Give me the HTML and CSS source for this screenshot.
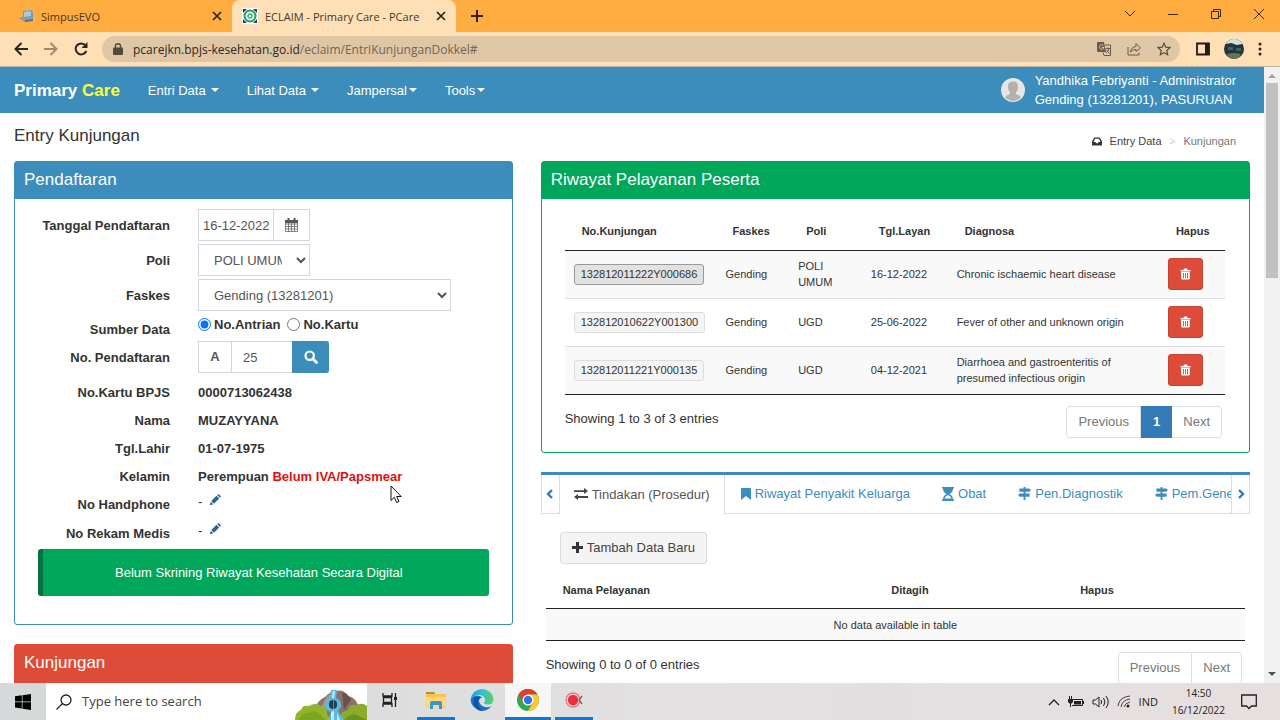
FILE: index.html
```html
<!DOCTYPE html>
<html lang="id">
<head>
    <meta charset="UTF-8">
    <meta name="viewport" content="width=device-width, initial-scale=1.0">
    <title>ECLAIM - Primary Care - PCare</title>
    <link rel="stylesheet" href="styles.css">
</head>
<body>
    <svg class="defs" width="0" height="0">
        <symbol id="i-pencil" viewBox="0 0 14 14"><path d="M1 13l1-4 3 3zM2.6 8.2L8.700 2.1l3.2 3.2-6.100 6.100zM9.500 1.300l.8-.8q.7-.6 1.400 0l1.800 1.800q.6.7 0 1.400l-.8.8z"/></symbol>
        <symbol id="i-trash" viewBox="0 0 12 12"><path fill-rule="evenodd" d="M4 0h4v1.500h3.500V3H.5V1.500H4zM1.300 3.500h9.400V11q0 1-1 1H2.300q-1 0-1-1zM3.300 5v5.500h1V5zM5.500 5v5.500h1V5zM7.700 5v5.500h1V5z"/></symbol>
        <symbol id="i-sign" viewBox="0 0 14 14"><path d="M6 0h2v14H6zM1.500 1.500H12l2 1.800-2 1.800H1.500zM2 7h10.500v3.500H2L0 8.700z"/></symbol>
        <symbol id="i-close" viewBox="0 0 10 10"><path d="M1 1l8 8M9 1l-8 8" fill="none" stroke="#2b2218" stroke-width="1.700"/></symbol>
    </svg>

    <div class="tabstrip">
        <div class="tab">
            <svg class="favicon" width="14" height="14" viewBox="0 0 14 14"><path d="M3 2l8-1 2 2v6l-9 1-1-1z" fill="#6f9cb9"/><path d="M4 3l7-1v5l-7 1z" fill="#a9c9dc"/><path d="M0 8h3l1 2 9-1v3l-8 1-5-3z" fill="#8f9aa6"/><path d="M5 11l8-1v2l-8 1z" fill="#56748c"/></svg>
            <span class="tab-title">SimpusEVO</span>
            <button class="tab-close" aria-label="Close"><svg width="10" height="10"><use href="#i-close"/></svg></button>
        </div>
        <div class="tab active">
            <svg class="favicon" width="16" height="16" viewBox="0 0 16 16"><rect width="16" height="16" rx="1" fill="#fff"/><path d="M1 1h4L1 5z" fill="#1b3c83"/><path d="M15 1v4l-4-4zM1 15v-4l4 4zM15 15h-4l4-4z" fill="#1b3c83"/><circle cx="8" cy="8" r="5.500" fill="none" stroke="#19a05b" stroke-width="2"/><circle cx="8" cy="8" r="2" fill="none" stroke="#35b56f" stroke-width="1.500"/></svg>
            <span class="tab-title">ECLAIM - Primary Care - PCare</span>
            <button class="tab-close" aria-label="Close"><svg width="10" height="10"><use href="#i-close"/></svg></button>
        </div>
        <button class="new-tab" aria-label="New tab"><svg width="12" height="12"><path d="M6 0v12M0 6h12" stroke="#2b2218" stroke-width="2"/></svg></button>
        <div class="window-buttons">
            <button aria-label="Search tabs"><svg width="12" height="12"><path d="M1 3l5 5 5-5" fill="none" stroke="#3a2a12"/></svg></button>
            <button aria-label="Minimize"><svg width="12" height="12"><path d="M1 6.500h10" stroke="#3a2a12"/></svg></button>
            <button aria-label="Restore"><svg width="12" height="12"><path d="M1.500 3.500h7v7h-7zM3.500 3.500v-2h7v7h-2" fill="none" stroke="#3a2a12"/></svg></button>
            <button aria-label="Close"><svg width="12" height="12"><path d="M1 1l10 10M11 1L1 11" stroke="#3a2a12"/></svg></button>
        </div>
    </div>

    <div class="toolbar">
        <button aria-label="Back"><svg width="14" height="14" viewBox="0 0 14 14"><path d="M14 7H2M7.500 1L1.500 7l6 6" fill="none" stroke="#2b2520" stroke-width="2"/></svg></button>
        <button aria-label="Forward"><svg width="14" height="14" viewBox="0 0 14 14"><path d="M0 7h12M6.500 1l6 6-6 6" fill="none" stroke="#a38a6c" stroke-width="2"/></svg></button>
        <button aria-label="Reload"><svg width="14" height="14" viewBox="0 0 14 14"><path d="M11.500 3.500A5.500 5.500 0 1 0 12.300 9" fill="none" stroke="#2b2520" stroke-width="2"/><path d="M13.500 0v6h-6z" fill="#2b2520"/></svg></button>
        <div class="address">
            <svg width="10" height="12" viewBox="0 0 10 12"><path d="M1 4.500h8q1 0 1 1V11q0 1-1 1H1q-1 0-1-1V5.500q0-1 1-1z" fill="#55493b"/><path d="M2.500 5V3q0-2.200 2.500-2.200T7.500 3v2" fill="none" stroke="#55493b" stroke-width="1.400"/></svg>
            <span class="url"><b>pcarejkn.bpjs-kesehatan.go.id</b>/eclaim/EntriKunjunganDokkel#</span>
            <button aria-label="Translate"><svg width="14" height="14" viewBox="0 0 14 14"><path d="M1 0h6l2 10H1Q0 10 0 9V1q0-1 1-1z" fill="#6b5b48"/><path d="M6.500 3.500A2.300 2.300 0 1 0 7 5.500H4.800" fill="none" stroke="#dfc6a4"/><path d="M8 3h5.500v10.500H7L6 10.500" fill="none" stroke="#6b5b48"/><path d="M8.500 6.500H13M10.700 5.500v1M12 6.500q-.5 2.500-3 4.500M9.500 8l3 3.500" fill="none" stroke="#6b5b48"/></svg></button>
            <button aria-label="Share"><svg width="14" height="14" viewBox="0 0 14 14"><path d="M1 5v8h11v-2.500M3.500 10Q4 5 9 4.500V1.500l4.500 4.500L9 9.500V7.500Q5.500 7.300 3.500 10z" fill="none" stroke="#6b5b48"/></svg></button>
            <button aria-label="Bookmark"><svg width="14" height="14" viewBox="0 0 14 14"><path d="M7 1.200l1.800 4 4.200.4-3.200 2.900.9 4.300L7 10.600l-3.700 2.200.9-4.300L1 5.600l4.200-.4z" fill="none" stroke="#5b4c3a" stroke-width="1.200"/></svg></button>
        </div>
        <button aria-label="Side panel"><svg width="14" height="14" viewBox="0 0 14 14"><path d="M1 1.500h12v11H1z" fill="none" stroke="#221b14" stroke-width="1.800"/><path d="M9 1h4v12H9z" fill="#221b14"/></svg></button>
        <button aria-label="Profile"><svg width="20" height="20" viewBox="0 0 20 20"><circle cx="10" cy="10" r="10" fill="#26343a"/><path d="M1.500 5Q5 0 10 0t8.500 5l-6 1-5-2z" fill="#cfe0e6"/><path d="M4 8h5v3H4zM12 9h5v3h-5z" fill="#3d626b"/><path d="M3 15q7-2 14 0-2 5-7 5t-7-5z" fill="#5b7850"/></svg></button>
        <button aria-label="Menu"><svg width="4" height="14" viewBox="0 0 4 14"><g fill="#2b2520"><circle cx="2" cy="2" r="1.500"/><circle cx="2" cy="7" r="1.500"/><circle cx="2" cy="12" r="1.500"/></g></svg></button>
    </div>

    <div class="viewport">
        <div class="page">
            <nav class="navbar">
                <a href="#" class="brand">Primary <span>Care</span></a>
                <a href="#" class="nav-link">Entri Data <i class="caret"></i></a>
                <a href="#" class="nav-link">Lihat Data <i class="caret"></i></a>
                <a href="#" class="nav-link">Jampersal<i class="caret"></i></a>
                <a href="#" class="nav-link">Tools<i class="caret"></i></a>
                <div class="user">
                    <svg width="24" height="24" viewBox="0 0 24 24"><circle cx="12" cy="12" r="12" fill="#e6e6e6"/><path d="M12 3.500q5.500 0 5 6 0 3-2 5v1.700q4 1 4.800 3.300Q16 23 12 23t-7.800-3.500q.8-2.300 4.800-3.300v-1.700Q7 12.500 7 9.500q-.5-6 5-6z" fill="#b3b0ae"/></svg>
                    <div>Yandhika Febriyanti - Administrator<br>Gending (13281201), PASURUAN</div>
                </div>
            </nav>

            <header class="content-header">
                <h1>Entry Kunjungan</h1>
                <div class="breadcrumb">
                    <svg width="10" height="9" viewBox="0 0 11 9"><path fill-rule="evenodd" d="M2.500 0h6L11 4.500V8q0 1-1 1H1Q0 9 0 8V4.500zM3.300 1.500L1.700 5h2l1 1.500h1.600l1-1.500h2L7.700 1.500z" fill="#333"/></svg>
                    <a href="#">Entry Data</a>
                    <span class="sep">&gt;</span>
                    <span class="current">Kunjungan</span>
                </div>
            </header>

            <main class="content">
                <div class="col-left">
                    <section class="panel blue">
                        <h2>Pendaftaran</h2>
                        <form class="form">
                            <div class="form-row">
                                <label for="tanggal">Tanggal Pendaftaran</label>
                                <div class="group date">
                                    <input type="text" id="tanggal" value="16-12-2022">
                                    <button type="button" class="addon" aria-label="Kalender"><svg width="13" height="14" viewBox="0 0 13 14"><path d="M.5 3h12v10.500H.5zM.5 6h12M.5 8.500h12M.5 11h12M3.500 5v8.500M6.500 5v8.500M9.500 5v8.500" fill="none" stroke="#666" stroke-width=".8"/><path d="M0 2h13v3H0zM2.500 0h2v4h-2zM8.500 0h2v4h-2z" fill="#555"/></svg></button>
                                </div>
                            </div>
                            <div class="form-row">
                                <label for="poli">Poli</label>
                                <select id="poli" class="short"><option>POLI UMUM</option></select>
                            </div>
                            <div class="form-row">
                                <label for="faskes">Faskes</label>
                                <select id="faskes" class="long"><option>Gending (13281201)</option></select>
                            </div>
                            <div class="form-row source">
                                <span class="label">Sumber Data</span>
                                <div class="radios">
                                    <input type="radio" name="sumber" id="antrian" checked><label for="antrian">No.Antrian</label>
                                    <input type="radio" name="sumber" id="kartu"><label for="kartu">No.Kartu</label>
                                </div>
                            </div>
                            <div class="form-row">
                                <label for="nomor">No. Pendaftaran</label>
                                <div class="group number">
                                    <span class="prefix">A</span>
                                    <input type="text" id="nomor" value="25">
                                    <button type="button" class="search" aria-label="Cari"><svg width="14" height="14" viewBox="0 0 14 14"><circle cx="5.700" cy="5.700" r="4.200" fill="none" stroke="#fff" stroke-width="2.200"/><path d="M9 9l3.500 3.500" stroke="#fff" stroke-width="2.800" stroke-linecap="round"/></svg></button>
                                </div>
                            </div>
                            <div class="facts">
                                <div class="fact"><span class="label">No.Kartu BPJS</span><b>0000713062438</b></div>
                                <div class="fact"><span class="label">Nama</span><b>MUZAYYANA</b></div>
                                <div class="fact"><span class="label">Tgl.Lahir</span><b>01-07-1975</b></div>
                                <div class="fact"><span class="label">Kelamin</span><b>Perempuan <span class="warn">Belum IVA/Papsmear</span></b></div>
                                <div class="fact editable"><span class="label">No Handphone</span><span>- <a href="#" aria-label="Ubah"><svg width="12" height="12"><use href="#i-pencil"/></svg></a></span></div>
                                <div class="fact editable"><span class="label">No Rekam Medis</span><span>- <a href="#" aria-label="Ubah"><svg width="12" height="12"><use href="#i-pencil"/></svg></a></span></div>
                            </div>
                            <div class="callout">Belum Skrining Riwayat Kesehatan Secara Digital</div>
                        </form>
                    </section>
                    <section class="panel red">
                        <h2>Kunjungan</h2>
                    </section>
                </div>

                <div class="col-right">
                    <section class="panel green">
                        <h2>Riwayat Pelayanan Peserta</h2>
                        <div class="history">
                            <table class="history-table">
                                <thead>
                                    <tr><th>No.Kunjungan</th><th>Faskes</th><th>Poli</th><th>Tgl.Layan</th><th>Diagnosa</th><th>Hapus</th></tr>
                                </thead>
                                <tbody>
                                    <tr>
                                        <td><button class="visit pressed">132812011222Y000686</button></td><td>Gending</td><td>POLI UMUM</td><td>16-12-2022</td><td>Chronic ischaemic heart disease</td>
                                        <td><button class="delete" aria-label="Hapus"><svg width="11" height="12"><use href="#i-trash"/></svg></button></td>
                                    </tr>
                                    <tr>
                                        <td><button class="visit">132812010622Y001300</button></td><td>Gending</td><td>UGD</td><td>25-06-2022</td><td>Fever of other and unknown origin</td>
                                        <td><button class="delete" aria-label="Hapus"><svg width="11" height="12"><use href="#i-trash"/></svg></button></td>
                                    </tr>
                                    <tr>
                                        <td><button class="visit">132812011221Y000135</button></td><td>Gending</td><td>UGD</td><td>04-12-2021</td><td>Diarrhoea and gastroenteritis of presumed infectious origin</td>
                                        <td><button class="delete" aria-label="Hapus"><svg width="11" height="12"><use href="#i-trash"/></svg></button></td>
                                    </tr>
                                </tbody>
                            </table>
                            <div class="table-footer">
                                <span>Showing 1 to 3 of 3 entries</span>
                                <div class="pagination"><a href="#">Previous</a><a href="#" class="on">1</a><a href="#">Next</a></div>
                            </div>
                        </div>
                    </section>

                    <section class="services">
                        <div class="service-tabs">
                            <button class="scroll" aria-label="Kiri"><svg width="8" height="10" viewBox="0 0 8 10"><path d="M6 1L2 5l4 4" fill="none" stroke="#337ab7" stroke-width="2.400"/></svg></button>
                            <div class="tab-list">
                                <a href="#" class="on"><svg width="14" height="12" viewBox="0 0 14 12"><path d="M0 2.200h10V0l4 3-4 3V4H0zM14 8H4V6L0 9l4 3V10h10z" fill="#444"/></svg>Tindakan (Prosedur)</a>
                                <a href="#"><svg width="10" height="12" viewBox="0 0 10 12"><path d="M1 0h8q1 0 1 1v11L5 8l-5 4V1q0-1 1-1z"/></svg>Riwayat Penyakit Keluarga</a>
                                <a href="#"><svg width="12" height="14" viewBox="0 0 12 14"><path fill-rule="evenodd" d="M0 0h12v1.500H0zM0 12.500h12V14H0zM1 1.500h10q0 4-3.500 5.500Q11 8.500 11 12.500H1Q1 8.500 4.500 7 1 5.500 1 1.500zM2.500 11.500h7Q9 9 6 8 3 9 2.500 11.500z"/></svg>Obat</a>
                                <a href="#"><svg width="13" height="13"><use href="#i-sign"/></svg>Pen.Diagnostik</a>
                                <a href="#"><svg width="13" height="13"><use href="#i-sign"/></svg>Pem.Gene</a>
                            </div>
                            <button class="scroll right" aria-label="Kanan"><svg width="8" height="10" viewBox="0 0 8 10"><path d="M2 1l4 4-4 4" fill="none" stroke="#337ab7" stroke-width="2.400"/></svg></button>
                        </div>
                        <div class="service-body">
                            <button class="add"><svg width="11" height="11"><path d="M4 0h3v4h4v3H7v4H4V7H0V4h4z" fill="#333"/></svg>Tambah Data Baru</button>
                            <table class="service-table">
                                <thead>
                                    <tr><th>Nama Pelayanan</th><th>Ditagih</th><th>Hapus</th></tr>
                                </thead>
                                <tbody>
                                    <tr><td colspan="3">No data available in table</td></tr>
                                </tbody>
                            </table>
                            <div class="table-footer">
                                <span>Showing 0 to 0 of 0 entries</span>
                                <div class="pagination"><a href="#">Previous</a><a href="#">Next</a></div>
                            </div>
                        </div>
                    </section>
                </div>
            </main>
        </div>
        <div class="scrollbar">
            <svg width="8" height="5"><path d="M0 5l4-4 4 4z" fill="#a0a0a0"/></svg>
            <div class="thumb"></div>
            <svg width="8" height="5"><path d="M0 0l4 4 4-4z" fill="#505050"/></svg>
        </div>
    </div>

    <div class="taskbar">
        <button class="start" aria-label="Start"><svg width="16" height="16" viewBox="0 0 16 16"><path d="M0 2.300L6.800 1.300v6.200H0zM7.500 1.200L16 0v7.500H7.500zM0 8.300h6.800v6.300L0 13.600zM7.500 8.300H16V16l-8.500-1.200z" fill="#000"/></svg></button>
        <div class="search-box">
            <svg width="16" height="16" viewBox="0 0 16 16"><circle cx="10" cy="6" r="5" fill="none" stroke="#222" stroke-width="1.300"/><path d="M6.500 9.500L.5 15.500" stroke="#222" stroke-width="1.300"/></svg>
            <input type="text" placeholder="Type here to search" aria-label="Search">
            <svg class="scene" width="72" height="30" viewBox="0 0 72 30">
                <path d="M16 30Q20 11 30 7q5-6 12-6 6-2 11 5 7 1 10 9l9 15z" fill="#8b7166"/>
                <path d="M31 8Q36 1 41 2l-6 13-12 8z" fill="#ae978a"/>
                <path d="M47 2q6 1 9 8l-7 10z" fill="#69544d"/>
                <path d="M0 30q0-8 6-10 1-5 8-4 6-4 12 0 7 1 6 8l4 6z" fill="#93b52c"/>
                <path d="M4 30q2-7 9-7 7-4 12 1l6 6z" fill="#7da524"/>
                <path d="M43 30q3-9 10-10 1-6 9-5 5-3 10 1v14z" fill="#8cad2b"/>
                <path d="M49 30q6-7 13-5l10 5z" fill="#6b9322"/>
                <path d="M36 0h6l-1 8q6 3 5 9l-3 4 6 9H33l3-8q-5-1-6-6 0-5 5-8z" fill="#55bce8"/>
                <path d="M38 1h2l-1 7h-2zM36 22l3-1v9h-3zM42 23l3 7h-3z" fill="#c9effb"/>
                <rect x="34" y="10" width="8" height="9" rx="4" fill="#293c4a"/>
                <path d="M38 10h1v9h-1z" fill="#5f8295"/>
            </svg>
        </div>
        <button class="app" aria-label="Task view"><svg width="16" height="14" viewBox="0 0 16 14"><path d="M1 0v3h9V0M1 14v-3h9v3M1.500 4.500h8v5h-8zM13.500 0v14" fill="none" stroke="#222" stroke-width="1.300"/><path d="M12 4h3v3h-3z" fill="#222"/></svg></button>
        <button class="app running" aria-label="File Explorer"><svg width="20" height="18" viewBox="0 0 20 18"><path d="M0 1.500Q0 1 1 1h7l2 2h9q1 0 1 1v12H0z" fill="#f5c34e"/><path d="M0 1h8l1 2H0z" fill="#bd8a2c"/><path d="M0 6h20v11H0z" fill="#ffd873"/><path d="M4 18V12q0-2 2-2h8q2 0 2 2v6h-3v-4H7v4z" fill="#3b95cf"/></svg></button>
        <button class="app" aria-label="Edge"><svg width="24" height="24" viewBox="0 0 24 24"><defs><linearGradient id="edge" x1="0" y1="0" x2="1" y2="0"><stop offset="0" stop-color="#2297dc"/><stop offset=".5" stop-color="#2fc1d8"/><stop offset="1" stop-color="#61d05d"/></linearGradient></defs><path d="M.7 11A11.500 11.500 0 0 0 21.500 18q-3 2-6.500 1-5-1-6-6 0-3 3-4Q5 5 .7 11z" fill="#176fc4"/><path d="M5 9Q2 16 7 21q3 2 6 2Q7 19 8 13q1-3 4-4z" fill="#1453a0"/><path d="M.7 11A11.500 11.500 0 0 1 23.500 11q0 5.500-5.500 5.500-4 0-4-2 1.500-1 1-3Q14 7 9 7 3.500 7 .7 11z" fill="url(#edge)"/></svg></button>
        <button class="app running current" aria-label="Chrome"><svg width="22" height="22" viewBox="0 0 22 22"><circle cx="11" cy="11" r="11" fill="#2da94f"/><path d="M1.500 5.500A11 11 0 0 1 20.500 5.500H11L6.200 13.700z" fill="#e33b2e"/><path d="M20.500 5.500A11 11 0 0 1 11 22l4.800-8.200L11 5.500z" fill="#fcc934"/><circle cx="11" cy="11" r="5.500" fill="#fff"/><circle cx="11" cy="11" r="4.200" fill="#2d75e8"/></svg></button>
        <button class="app running" aria-label="Recorder"><svg width="18" height="16" viewBox="0 0 18 16"><circle cx="8" cy="8" r="7" fill="none" stroke="#e87980" stroke-width="1.300"/><circle cx="8" cy="8" r="5.200" fill="#ee2e3c"/><path d="M17 4l-3 4 3 4" fill="none" stroke="#a94a50" stroke-width="1.300"/></svg></button>
        <div class="tray">
            <svg width="12" height="8"><path d="M1 7l5-5 5 5" fill="none" stroke="#222" stroke-width="1.300"/></svg>
            <svg width="16" height="12" viewBox="0 0 16 12"><path d="M5 3.500h9.500v6H4" fill="none" stroke="#222"/><path d="M6 5h7v3.500H6zM14.500 5H16v3h-1.500zM0 3h5v3L3.500 7.500h-2L0 6zM1 0h1v3H1zM3 0h1v3H3zM2 7h1v4H2z" fill="#222"/></svg>
            <svg width="17" height="14" viewBox="0 0 17 14"><path d="M1 5h2.500L7 2v10L3.500 9H1zM9 5q1.500 2 0 4M11.500 3q3 4 0 8M14 1q4.500 6 0 12" fill="none" stroke="#222"/></svg>
            <svg width="14" height="13" viewBox="0 0 14 13"><g fill="none" stroke="#444"><path d="M1 11Q2 2 13 1M4 12q1-7 9-8M7 12q1-4 6-5"/></g><circle cx="11" cy="11" r="1.500" fill="#222"/></svg>
            <span>IND</span>
            <div class="clock">14:50<br>16/12/2022</div>
            <svg width="16" height="16" viewBox="0 0 16 16"><path d="M.7 1h14.600v11H10.500L8 14.500 5.500 12H.7z" fill="none" stroke="#222" stroke-width="1.300"/></svg>
        </div>
    </div>

    <svg class="cursor" width="12" height="19" viewBox="0 0 12 19"><path d="M1 1v14.500l3.300-3.200 2.300 5.200 2.400-1-2.300-5h4.500z" fill="#fff" stroke="#111"/></svg>
</body>
</html>
```

FILE: styles.css
```css
* { box-sizing: border-box; }
body { margin: 0; height: 100vh; display: flex; flex-direction: column; overflow: hidden; position: relative; font-family: "Liberation Sans", Arial, sans-serif; font-size: 13px; line-height: 19px; color: #333; background: #fff; }
a { color: inherit; text-decoration: none; }
button, input, select { font: inherit; color: inherit; margin: 0; }
button { padding: 0; border: none; background: none; display: flex; align-items: center; justify-content: center; cursor: pointer; }
svg { display: block; flex: none; }
.defs { position: absolute; }

/* browser tabs */
.tabstrip { height: 32px; flex: none; display: flex; align-items: center; background: #ffac40; font-family: "Open Sans", sans-serif; font-size: 11px; color: #4a3720; }
.tab { width: 232px; height: 32px; padding: 0 10px 0 20px; display: flex; align-items: center; gap: 7px; }
.tab.active { width: 224px; padding: 0 10px; background: #ffdfb5; border-radius: 8px 8px 0 0; }
.tab-title { flex: 1; white-space: nowrap; }
.tab-close { width: 10px; height: 10px; }
.new-tab { width: 42px; height: 32px; }
.window-buttons { margin-left: auto; display: flex; }
.window-buttons button { width: 43px; height: 32px; padding-bottom: 4px; }

.toolbar { height: 34px; flex: none; padding: 0 18px 0 14px; display: flex; align-items: center; gap: 16px; background: #ffdfb5; }
.toolbar > button:nth-last-child(2) { margin: 0 -2px; }
.address { flex: 1; height: 26px; margin-left: -2px; padding: 0 9px 0 11px; display: flex; align-items: center; gap: 16px; border-radius: 13px; background: #dfc6a4; }
.address .url { flex: 1; margin-left: -6px; white-space: nowrap; font-family: "Open Sans", sans-serif; font-size: 12px; color: #75654f; }
.address .url b { font-weight: normal; color: #2f261b; }

.viewport { flex: 1; min-height: 0; display: flex; border-top: 1px solid #b9b6a6; }
.page { flex: 1; min-width: 0; overflow: hidden; }
.scrollbar { width: 16px; padding: 6px 0; display: flex; flex-direction: column; align-items: center; gap: 5px; background: #f1f1f1; }
.scrollbar .thumb { width: 12px; height: 195px; background: #c1c1c1; }
.scrollbar svg:last-child { margin-top: auto; }

/* top navigation */
.navbar { height: 46px; padding: 0 28px 0 14px; display: flex; align-items: center; gap: 28px; background: #3c8dbc; color: #fff; }
.brand { font-size: 17px; font-weight: bold; }
.brand span { color: #ff3; }
.nav-link { display: flex; align-items: center; gap: 5px; }
.nav-link:nth-child(n+4) { gap: 2px; }
.caret { border: 4px solid transparent; border-top-color: #fff; border-bottom: none; }
.user { margin-left: auto; display: flex; align-items: center; gap: 10px; }

.content-header { height: 48px; padding: 0 28px 0 14px; display: flex; justify-content: space-between; }
.content-header h1 { margin: 0; font-size: 17px; font-weight: normal; line-height: 46px; }
.breadcrumb { padding-top: 8px; display: flex; align-items: center; gap: 8px; font-size: 11px; color: #444; }
.breadcrumb .sep { color: #ccc; font-size: 10px; }
.breadcrumb .current { color: #777; }

.content { padding: 0 14px; display: grid; grid-template-columns: repeat(12, 1fr); gap: 28px; }
.col-left { grid-column: span 5; }
.col-right { grid-column: span 7; }

.panel { margin-bottom: 19px; border: 1px solid; border-radius: 3px; }
.panel h2 { margin: 0; padding: 0 9px 2px; font-size: 17px; font-weight: normal; line-height: 35px; color: #fff; }
.panel.blue { border-color: #3c8dbc; }
.panel.blue h2 { background: #3c8dbc; }
.panel.green { border-color: #00a65a; }
.panel.green h2 { background: #00a65a; }
.panel.red { height: 200px; border-color: #dd4b39; }
.panel.red h2 { padding-bottom: 4px; background: #dd4b39; }

/* registration form */
.form { padding: 10px 23px 28px; }
.form-row { display: grid; grid-template-columns: 132px 1fr; gap: 28px; margin-bottom: 3px; align-items: center; justify-items: start; }
.form-row > label, .form .label { justify-self: end; font-weight: bold; white-space: nowrap; }
.group { height: 32px; display: flex; border: 1px solid #d2d6de; }
.group input { min-width: 0; flex: 1; border: none; background: #fff; color: #555; }
.date { width: 112px; }
.date input { padding: 0 4px; }
.date .addon { width: 36px; border-left: 1px solid #d2d6de; }
.form select { height: 32px; padding: 0 11px; border: 1px solid #d2d6de; background: #fff; color: #555; }
.form select.short { width: 112px; }
.form select.long { width: 253px; }
.form-row.source { height: 27px; margin: 0; align-items: start; }
.source .label { padding-top: 6px; }
.radios { height: 20px; display: flex; align-items: center; gap: 3px; font-weight: bold; }
.radios input { width: 13px; height: 13px; }
.radios label { margin-right: 4px; }
.number { width: 131px; border-right: none; }
.number .prefix { width: 33px; text-align: center; line-height: 30px; font-weight: bold; color: #555; border-right: 1px solid #d2d6de; }
.number input { padding: 0 11px; }
.number .search { width: 37px; margin: -1px 0; background: #3c8dbc; border-radius: 0 3px 3px 0; }
.facts { padding-top: 3px; }
.fact { display: grid; grid-template-columns: 132px 1fr; gap: 28px; line-height: 28px; }
.fact .warn { color: #e01010; }
.fact.editable { height: 29px; line-height: 22px; }
.fact.editable .label { line-height: 28px; }
.fact a { display: inline-block; margin-left: 3px; }
.fact svg { fill: #2b6494; }
.callout { padding: 14px 28px 14px 14px; border-left: 5px solid #00733e; border-radius: 3px; background: #00a65a; color: #fff; text-align: center; }

/* tables */
table { width: 100%; border-collapse: collapse; table-layout: fixed; font-size: 11px; line-height: 16px; }
th { height: 37px; padding: 0 17px; text-align: left; white-space: nowrap; border-bottom: 1px solid #222; }
td { padding: 0 9px; border-bottom: 1px solid #ddd; }
tbody tr:nth-child(odd) { background: #f9f9f9; }
tbody tr:last-child td { border-bottom: 1px solid #222; }
.history { padding: 14px 24px 14px 23px; }
.history td { height: 48px; }
.history-table th:nth-child(1) { width: 23%; }
.history-table th:nth-child(2), .history-table th:nth-child(3) { width: 11%; }
.history-table th:nth-child(4) { width: 13%; }
.history-table th:nth-child(5) { width: 32%; }
.history-table th:nth-child(2) { padding-left: 16px; }
.visit { height: 21px; padding: 0 6px; border: 1px solid #ddd; border-radius: 3px; background: #f4f4f4; }
.visit.pressed { border-color: #999; background: #e2e2e2; }
.delete { width: 35px; height: 32px; border: 1px solid #c94434; border-radius: 3px; background: #dd4b39; }
.delete svg { fill: #fff; }
.table-footer { padding-top: 11px; display: flex; justify-content: space-between; }
.table-footer > span { padding-top: 3px; }
.pagination { margin-right: 3px; display: flex; border: 1px solid #ddd; border-radius: 4px; color: #777; }
.pagination a { padding: 0 11px; line-height: 30px; }
.pagination a + a { border-left: 1px solid #ddd; }
.pagination .on { margin: -1px 0; padding: 1px 12px; background: #337ab7; color: #fff; font-weight: bold; }
.pagination .on + a { border-left: none; }

/* service tabs */
.service-tabs { display: flex; height: 42px; border-top: 3px solid #3c8dbc; }
.scroll { width: 19px; border: 1px solid #ddd; border-top: none; }
.tab-list { flex: 1; min-width: 0; display: flex; overflow: hidden; color: #3c8dbc; }
.tab-list a { padding: 0 16px; display: flex; align-items: center; gap: 4px; white-space: nowrap; border-bottom: 1px solid #ddd; }
.tab-list a:last-child { padding-right: 0; flex: 1; }
.tab-list .on { padding: 0 14px; color: #555; border-bottom: none; border-right: 1px solid #ddd; }
.tab-list svg { fill: #3c8dbc; }
.service-body { padding: 18px 5px; }
.add { height: 32px; margin-left: 14px; padding: 0 11px; gap: 4px; border: 1px solid #ddd; border-radius: 3px; background: #f4f4f4; color: #444; }
.service-table { margin-top: 8px; }
.service-table th:nth-child(1) { width: 47%; }
.service-table th:nth-child(2) { width: 27%; }
.service-table td { height: 32px; text-align: center; }

/* windows taskbar */
.taskbar { height: 37px; flex: none; display: flex; background: linear-gradient(90deg, #d6d9d9, #e2e0e0 50%, #e6dfe0); font-family: "Open Sans", sans-serif; color: #222; }
.start { width: 46px; }
.search-box { width: 321px; padding-left: 10px; display: flex; align-items: center; gap: 10px; background: #fff; }
.search-box input { flex: 1; min-width: 0; border: none; padding: 0; background: none; font-size: 13px; }
.search-box input::placeholder { color: #444; }
.scene { align-self: flex-end; }
.app { width: 46px; border-bottom: 3px solid transparent; }
.app.running { margin: 0 4px; width: 38px; border-color: #1876c9; }
.app.current { margin: 0; width: 46px; background: #f7f7f7; }
.tray { margin-left: auto; padding-right: 23px; display: flex; align-items: center; gap: 8px; font-size: 11px; }
.clock { margin: 0 8px 0 6px; text-align: center; font-size: 10px; line-height: 17px; }

.cursor { position: absolute; left: 390px; top: 485px; }
```
